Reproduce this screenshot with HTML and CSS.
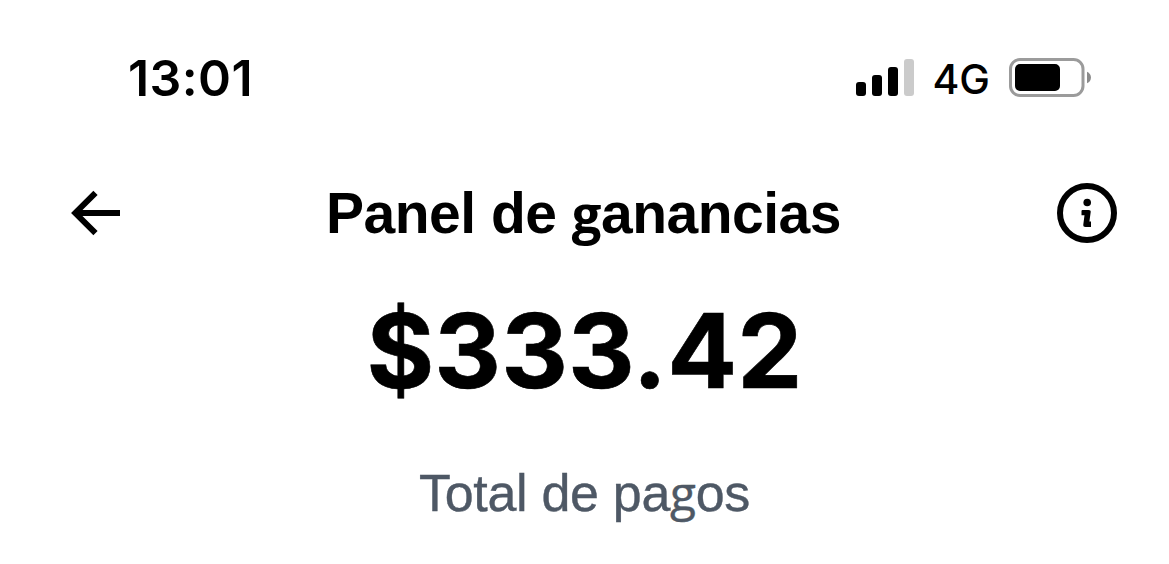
FILE: index.html
```html
<!DOCTYPE html>
<html lang="es">
<head>
<meta charset="utf-8">
<title>Panel de ganancias</title>
<link rel="stylesheet" href="styles.css">
</head>
<body>
<main class="screen">
  <div class="status">
    <span class="time">13:01</span>
    <div class="indicators">
      <svg class="signal" width="58" height="38" viewBox="0 0 58 38">
        <rect x="0" y="23" width="10" height="14" rx="3"/>
        <rect x="16" y="16" width="10" height="21" rx="3"/>
        <rect x="32" y="8" width="10" height="29" rx="3"/>
        <rect x="48" y="0" width="10" height="37" rx="3" fill="#cbcbcb"/>
      </svg>
      <span class="network">4G</span>
      <svg class="battery" width="83" height="40" viewBox="0 0 83 40">
        <rect x="1.5" y="1.5" width="72.5" height="36" rx="9.5" fill="none" stroke="#9b9b9b" stroke-width="3"/>
        <rect x="6" y="6" width="45" height="27" rx="5"/>
        <path d="M78 13.7C83.3 15.8 83.3 23.2 78 25.3Z" fill="#8b8b8b"/>
      </svg>
    </div>
  </div>
  <header class="header">
    <svg class="back" width="50" height="46" viewBox="0 0 50 46" fill="none" stroke="#000" stroke-width="6">
      <path d="M49 23H5"/><path d="M24.5 2.8L4.3 23L24.5 43.2" stroke-linejoin="miter"/>
    </svg>
    <h1 class="title">Panel de <span class="looped">g</span>anancias</h1>
    <svg class="info" width="60" height="60" viewBox="0 0 60 60">
      <circle cx="30" cy="30" r="27" fill="none" stroke="#000" stroke-width="6"/>
      <circle cx="30.2" cy="19.5" r="3.8"/>
      <path d="M25.5 27H31.5Q34 27 33.7 29L32.4 38.5H34V44H28.5Q26 44 26.3 41.5L27.5 32.3H24.5V28Q24.5 27 25.5 27Z"/>
    </svg>
  </header>
  <div class="amount">$333.42</div>
  <p class="caption">Total de pa<span class="looped">g</span>os</p>
</main>
</body>
</html>
```

FILE: styles.css
```css
body {
  margin: 0;
  background: #fff;
  color: #000;
}

.screen {
  width: 1169px;
  height: 564px;
  overflow: hidden;
  font-family: "Liberation Sans", sans-serif;
}

.status {
  display: flex;
  justify-content: space-between;
  align-items: center;
  height: 80px;
  padding: 38px 77px 0 128px;
}

.time {
  font: 600 50px/60px Inter, sans-serif;
  letter-spacing: 0.4px;
}

.indicators {
  display: flex;
  align-items: center;
}

.network {
  margin: 2px 19px 0 18px;
  font: 500 41px/50px Inter, sans-serif;
}

.header {
  display: flex;
  justify-content: space-between;
  align-items: center;
  height: 60px;
  margin-top: 65px;
  padding: 0 52px 0 71px;
}

.title {
  margin: 0 11px 0 0;
  font-size: 57px;
  line-height: 60px;
  font-weight: 700;
  letter-spacing: -0.5px;
  white-space: nowrap;
}

.looped {
  font-family: "Open Sans", sans-serif;
  font-size: 0.92em;
  line-height: 1;
}

.amount {
  margin-top: 48px;
  font: 700 103.5px/120px Inter, sans-serif;
  letter-spacing: 0;
  text-align: center;
  -webkit-text-stroke: 0.6px #000;
}

.caption {
  margin: 52px 0 0;
  font-size: 52px;
  line-height: 60px;
  letter-spacing: -0.3px;
  text-align: center;
  color: #4e5865;
  -webkit-text-stroke: 0.4px #4e5865;
}
```
